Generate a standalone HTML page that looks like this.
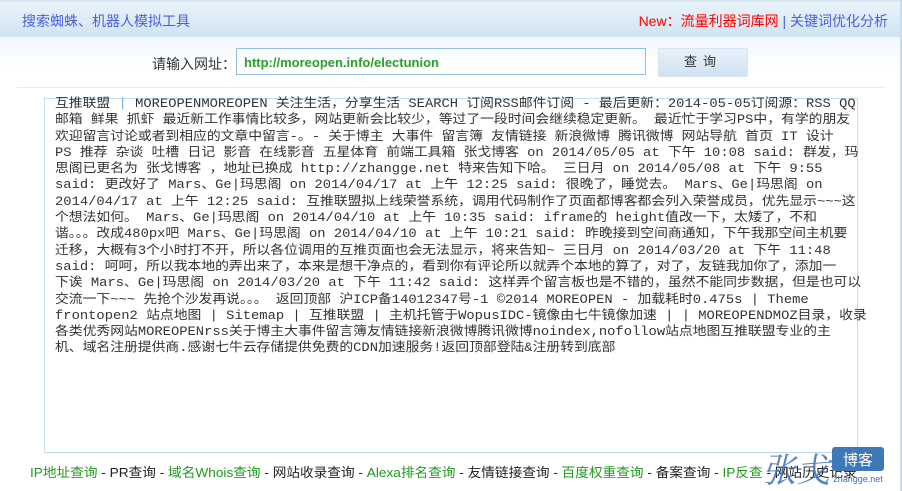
<!DOCTYPE html>
<html><head><meta charset="utf-8"><style>
body{margin:0;width:902px;height:491px;overflow:hidden;background:#fff;font-family:"Liberation Sans","Noto Sans CJK SC",sans-serif;position:relative}
.top{position:absolute;left:0;top:0;width:902px;height:37px;background:linear-gradient(#eaf4fb,#cfe3f2);border-top:2px solid #d6e6f3;box-sizing:border-box}
.band{position:absolute;left:0;top:37px;width:902px;height:30px;background:linear-gradient(#f2f8fd,#fff)}
.tl{position:absolute;left:22px;top:9px;font-size:14px;color:#4a5fe0}
.tr{position:absolute;right:14px;top:9px;font-size:14px;color:#4a5fe0}
.tr .r{color:#f00}
.lab{position:absolute;left:152px;top:54px;font-size:14px;color:#333}
.inp{position:absolute;left:236px;top:48px;width:410px;height:27px;border:1px solid #93c0e0;box-sizing:border-box;font-size:13px;font-weight:bold;color:#2aa02a;padding:6px 0 0 7px}
.btn{position:absolute;left:658px;top:48px;width:90px;height:29px;background:linear-gradient(#e8f2fa,#cfe2f1);border:1px solid #d7e6f2;box-sizing:border-box;font-size:13px;color:#333;text-align:center;line-height:26px;letter-spacing:6px}
.sep{position:absolute;left:17px;top:87px;width:869px;height:1px;background:#e2eef7}
.box{position:absolute;left:44px;top:98px;width:814px;height:355px;border:1px solid #c5dff0;border-bottom-color:#bcd6ea;box-sizing:border-box}
.txt{position:absolute;left:55px;top:96px;font-family:"Liberation Mono","Noto Sans CJK SC",monospace;font-size:12.6px;line-height:16.3px;color:#333;white-space:nowrap;transform:scaleX(1.096);transform-origin:0 0}
.txt b{font-weight:normal;color:#7aaedb}
.foot{position:absolute;left:30px;top:462px;font-size:13px;color:#222;white-space:nowrap;transform:scaleX(1.05);transform-origin:0 0}
.foot .g{color:#1d9a1d}
.logo{position:absolute;left:760px;top:442px;width:130px;height:49px}
.rb{position:absolute;right:0;top:0;width:2px;height:491px;background:#c8dcec}
</style></head><body>
<div class="top"><div class="tl">搜索蜘蛛、机器人模拟工具</div><div class="tr"><span class="r">New：流量利器词库网</span> | 关键词优化分析</div></div>
<div class="band"></div>
<div class="lab">请输入网址：</div>
<div class="inp">http://moreopen.info/electunion</div>
<div class="btn">查询</div>
<div class="sep"></div>
<div class="box"></div>
<div class="txt">互推联盟 <b>|</b> MOREOPENMOREOPEN 关注生活，分享生活 SEARCH 订阅RSS邮件订阅 - 最后更新：2014-05-05订阅源：RSS QQ<br>
邮箱 鲜果 抓虾 最近新工作事情比较多，网站更新会比较少，等过了一段时间会继续稳定更新。 最近忙于学习PS中，有学的朋友<br>
欢迎留言讨论或者到相应的文章中留言-。- 关于博主 大事件 留言簿 友情链接 新浪微博 腾讯微博 网站导航 首页 IT 设计<br>
PS 推荐 杂谈 吐槽 日记 影音 在线影音 五星体育 前端工具箱 张戈博客 on 2014/05/05 at 下午 10:08 said: 群发，玛<br>
思阁已更名为 张戈博客 ，地址已换成 http://zhangge.net 特来告知下哈。 三日月 on 2014/05/08 at 下午 9:55<br>
said: 更改好了 Mars、Ge|玛思阁 on 2014/04/17 at 上午 12:25 said: 很晚了，睡觉去。 Mars、Ge|玛思阁 on<br>
2014/04/17 at 上午 12:25 said: 互推联盟拟上线荣誉系统，调用代码制作了页面都博客都会列入荣誉成员，优先显示~~~这<br>
个想法如何。 Mars、Ge|玛思阁 on 2014/04/10 at 上午 10:35 said: iframe的 height值改一下，太矮了，不和<br>
谐。。。改成480px吧 Mars、Ge|玛思阁 on 2014/04/10 at 上午 10:21 said: 昨晚接到空间商通知，下午我那空间主机要<br>
迁移，大概有3个小时打不开，所以各位调用的互推页面也会无法显示，将来告知~ 三日月 on 2014/03/20 at 下午 11:48<br>
said: 呵呵，所以我本地的弄出来了，本来是想干净点的，看到你有评论所以就弄个本地的算了，对了，友链我加你了，添加一<br>
下诶 Mars、Ge|玛思阁 on 2014/03/20 at 下午 11:42 said: 这样弄个留言板也是不错的，虽然不能同步数据，但是也可以<br>
交流一下~~~ 先抢个沙发再说。。。 返回顶部 沪ICP备14012347号-1 ©2014 MOREOPEN - 加载耗时0.475s | Theme<br>
frontopen2 站点地图 | Sitemap | 互推联盟 | 主机托管于WopusIDC-镜像由七牛镜像加速 | | MOREOPENDMOZ目录，收录<br>
各类优秀网站MOREOPENrss关于博主大事件留言簿友情链接新浪微博腾讯微博noindex,nofollow站点地图互推联盟专业的主<br>
机、域名注册提供商.感谢七牛云存储提供免费的CDN加速服务!返回顶部登陆&amp;注册转到底部</div>
<div class="foot"><span class="g">IP地址查询</span> - PR查询 - <span class="g">域名Whois查询</span> - 网站收录查询 - <span class="g">Alexa排名查询</span> - 友情链接查询 - <span class="g">百度权重查询</span> - 备案查询 - <span class="g">IP反查</span> - 网站历史记录</div>
<svg class="logo" viewBox="0 0 130 49">
<text x="2" y="40" font-family="Noto Serif CJK SC,serif" font-size="34" font-style="italic" fill="#3a6fb5" opacity="0.85">张戈</text>
<rect x="72" y="5" width="52" height="24" rx="3" fill="#3f78b8"/>
<text x="98" y="23" text-anchor="middle" font-family="Noto Sans CJK SC,sans-serif" font-size="15" fill="#fff">博客</text>
<text x="98" y="40" text-anchor="middle" font-family="Liberation Sans,sans-serif" font-size="9" fill="#3a6fb5">zhangge.net</text>
</svg>
<div class="rb"></div>
</body></html>
